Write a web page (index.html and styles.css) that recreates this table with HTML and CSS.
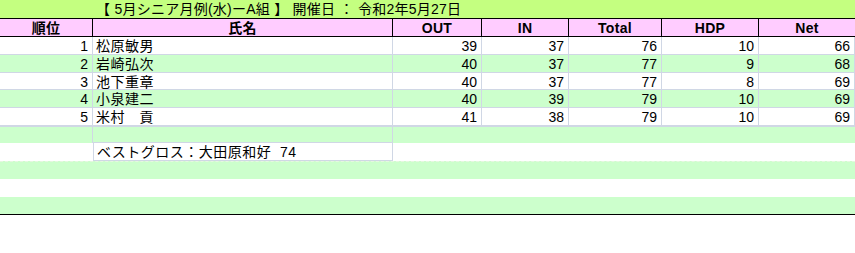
FILE: index.html
```html
<!DOCTYPE html>
<html lang="ja">
<head>
<meta charset="utf-8">
<title>5月シニア月例</title>
<link rel="stylesheet" href="styles.css">
</head>
<body>
<div class="sheet">
  <div class="title">【 5月シニア月例(水)ーA組 】 開催日 ： 令和2年5月27日</div>
  <div class="row head">
    <div class="c">順位</div>
    <div class="c">氏名</div>
    <div class="c">OUT</div>
    <div class="c">IN</div>
    <div class="c">Total</div>
    <div class="c">HDP</div>
    <div class="c">Net</div>
  </div>
  <div class="row data white h18">
    <div class="c num">1</div><div class="c name">松原敏男</div>
    <div class="c num">39</div><div class="c num">37</div><div class="c num">76</div><div class="c num">10</div><div class="c num">66</div>
  </div>
  <div class="row data green h18">
    <div class="c num">2</div><div class="c name">岩崎弘次</div>
    <div class="c num">40</div><div class="c num">37</div><div class="c num">77</div><div class="c num">9</div><div class="c num">68</div>
  </div>
  <div class="row data white h17">
    <div class="c num">3</div><div class="c name">池下重章</div>
    <div class="c num">40</div><div class="c num">37</div><div class="c num">77</div><div class="c num">8</div><div class="c num">69</div>
  </div>
  <div class="row data green h18">
    <div class="c num">4</div><div class="c name">小泉建二</div>
    <div class="c num">40</div><div class="c num">39</div><div class="c num">79</div><div class="c num">10</div><div class="c num">69</div>
  </div>
  <div class="row data white last">
    <div class="c num">5</div><div class="c name">米村　貢</div>
    <div class="c num">41</div><div class="c num">38</div><div class="c num">79</div><div class="c num">10</div><div class="c num">69</div>
  </div>
  <div class="row extra green first">
    <div class="c"></div><div class="c box"></div><div class="c"></div>
  </div>
  <div class="row extra white h18">
    <div class="c"></div><div class="c box name">ベストグロス：大田原和好&nbsp;&nbsp;74</div><div class="c"></div>
  </div>
  <div class="row extra green dotted h18">
    <div class="c"></div><div class="c"></div><div class="c"></div>
  </div>
  <div class="row extra white h18">
    <div class="c"></div><div class="c"></div><div class="c"></div>
  </div>
  <div class="row extra green end">
    <div class="c"></div><div class="c"></div><div class="c"></div>
  </div>
</div>
</body>
</html>
```

FILE: styles.css
```css
html, body {
  margin: 0;
  padding: 0;
  background: #ffffff;
}

body {
  font-family: "Liberation Sans", "Noto Sans CJK JP", sans-serif;
  font-size: 14px;
  color: #000;
}

.sheet {
  width: 855px;
}

.title {
  height: 18px;
  line-height: 19px;
  padding-left: 96px;
  background: #c4ff80;
  white-space: nowrap;
  letter-spacing: 0.25px;
  box-sizing: border-box;
}

.row {
  display: grid;
  grid-template-columns: 93px 300px 89px 87px 93px 97px 96px;
  box-sizing: border-box;
}

.c {
  box-sizing: border-box;
  white-space: nowrap;
  overflow: hidden;
}

.head {
  height: 19px;
  background: #ffccff;
  border-top: 1px solid #000;
  border-bottom: 1px solid #000;
  font-weight: bold;
}

.head .c {
  text-align: center;
  line-height: 18px;
  border-right: 1px solid #000;
  letter-spacing: 0.3px;
}

.head .c:last-child {
  border-right: none;
}

.h18 {
  height: 18px;
}

.h17 {
  height: 17px;
}

.data .c {
  border-right: 1px solid #d0d7e5;
  border-bottom: 1px solid #d0d7e5;
  padding-top: 1px;
  line-height: 17px;
}

.data.h17 .c {
  line-height: 16px;
}

.data.last {
  height: 19px;
}

.data.last .c {
  border-bottom: 2px solid #d0d7e5;
  line-height: 16px;
}

.num {
  text-align: right;
  padding-right: 4px;
}

.name {
  padding-left: 3px;
  letter-spacing: 0.5px;
}

.white {
  background: #ffffff;
}

.green {
  background: #ccffcc;
}

.extra {
  grid-template-columns: 93px 300px 1fr;
}

.extra .c {
  line-height: 18px;
}

.extra.first {
  height: 16px;
}

.extra.first .c {
  border-right: 1px solid #d0d7e5;
}

.extra.first .c:last-child {
  border-right: none;
}

.extra .box {
  border-left: 1px solid #d0d7e5;
  border-right: 1px solid #d0d7e5;
  border-bottom: 1px solid #d0d7e5;
}

.extra.first .box {
  border-left: none;
}

.extra.dotted {
  border-top: 1px dashed #e6f7e0;
}

.extra.end {
  height: 18px;
  border-bottom: 1px solid #000;
}
```
